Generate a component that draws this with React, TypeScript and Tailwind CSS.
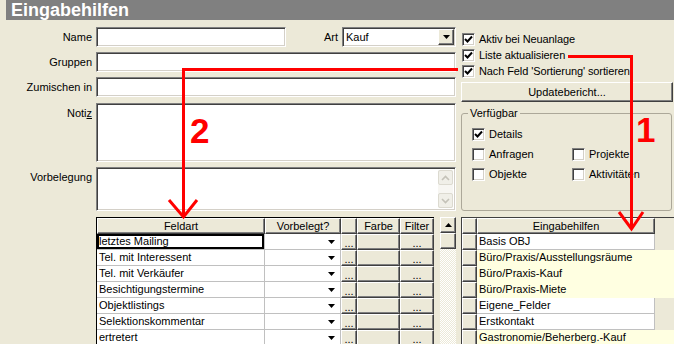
import React from 'react'

const sunken =
  'border border-t-[#808080] border-l-[#808080] border-r-white border-b-white bg-white shadow-[inset_1px_1px_0_#404040,inset_-1px_-1px_0_#d4d0c8]'
const raised =
  'border border-t-white border-l-white border-r-[#404040] border-b-[#404040] bg-[#ece9d8] shadow-[inset_-1px_-1px_0_#808080]'

const fields = [
  'letztes Mailing',
  'Tel. mit Interessent',
  'Tel. mit Verkäufer',
  'Besichtigungstermine',
  'Objektlistings',
  'Selektionskommentar',
  'ertretert',
]

const helpers = [
  { name: 'Basis OBJ', yellow: false },
  { name: 'Büro/Praxis/Ausstellungsräume', yellow: true },
  { name: 'Büro/Praxis-Kauf', yellow: true },
  { name: 'Büro/Praxis-Miete', yellow: true },
  { name: 'Eigene_Felder', yellow: false },
  { name: 'Erstkontakt', yellow: false },
  { name: 'Gastronomie/Beherberg.-Kauf', yellow: true },
]

function Check({ checked }: { checked?: boolean }) {
  return (
    <span className={`flex h-[13px] w-[13px] shrink-0 items-center justify-center ${sunken}`}>
      {checked && (
        <svg width="9" height="9" viewBox="0 0 9 9">
          <path d="M1 4 L3.5 6.5 L8 1.5" fill="none" stroke="black" strokeWidth="2" />
        </svg>
      )}
    </span>
  )
}

function Arrow({ up }: { up?: boolean }) {
  return (
    <svg width="7" height="4" viewBox="0 0 7 4">
      <polygon points={up ? '3.5,0 7,4 0,4' : '0,0 7,0 3.5,4'} fill="black" />
    </svg>
  )
}

function Label({ children, top }: { children: React.ReactNode; top?: boolean }) {
  return (
    <div className={`flex w-[92px] shrink-0 justify-end ${top ? 'items-start pt-[2px]' : 'items-center'}`}>
      {children}
    </div>
  )
}

function FieldGrid() {
  return (
    <div className="mt-[6px] ml-[96px] flex">
      <div className="w-[338px] border-t border-l border-black">
        <div className="flex h-[16px]">
          <div className={`w-[168px] text-center leading-[14px] ${raised}`}>Feldart</div>
          <div className={`w-[76px] text-center leading-[14px] ${raised}`}>Vorbelegt?</div>
          <div className={`w-[16px] ${raised}`} />
          <div className={`w-[43px] text-center leading-[14px] ${raised}`}>Farbe</div>
          <div className={`w-[34px] text-center leading-[14px] ${raised}`}>Filter</div>
        </div>
        {fields.map((f, i) => (
          <div key={f} className="flex h-[16px]">
            <div
              className={`w-[168px] truncate border-r border-b border-[#c0c0c0] bg-white pl-[2px] leading-[15px] ${
                i === 0 ? 'shadow-[inset_0_0_0_2px_black]' : ''
              }`}
            >
              {f}
            </div>
            <div className="flex w-[76px] justify-end border-r border-b border-[#c0c0c0] bg-white">
              <div className="flex w-[17px] items-center justify-center">
                <Arrow />
              </div>
            </div>
            <div className={`w-[16px] text-center leading-[16px] ${raised}`}>...</div>
            <div className={`w-[43px] ${raised}`} />
            <div className={`w-[34px] text-center leading-[16px] ${raised}`}>...</div>
          </div>
        ))}
      </div>
      <div className="ml-[6px] flex w-[16px] flex-col">
        <div className={`flex h-[16px] items-center justify-center ${raised}`}>
          <Arrow up />
        </div>
        <div className={`h-[16px] ${raised}`} />
        <div className="flex-1 bg-[repeating-conic-gradient(#ffffff_0_25%,#ece9d8_0_50%)] bg-[length:2px_2px]" />
      </div>
    </div>
  )
}

function LeftPane() {
  return (
    <div className="flex w-[456px] shrink-0 flex-col">
      <div className="flex h-[20px]">
        <Label>Name</Label>
        <div className={`ml-[4px] h-[20px] w-[190px] ${sunken}`} />
        <div className="flex flex-1 items-center justify-end pr-[4px]">Art</div>
        <div className={`flex h-[20px] w-[114px] items-center ${sunken}`}>
          <span className="flex-1 pl-[3px]">Kauf</span>
          <div className={`mr-[1px] flex h-[16px] w-[16px] items-center justify-center ${raised}`}>
            <Arrow />
          </div>
        </div>
      </div>
      <div className="mt-[5px] flex h-[20px]">
        <Label>Gruppen</Label>
        <div className={`ml-[4px] flex-1 ${sunken}`} />
      </div>
      <div className="mt-[5px] flex h-[20px]">
        <Label>Zumischen in</Label>
        <div className={`ml-[4px] flex-1 ${sunken}`} />
      </div>
      <div className="mt-[6px] flex h-[59px]">
        <Label top>
          <span>
            Noti<u>z</u>
          </span>
        </Label>
        <div className={`ml-[4px] flex-1 ${sunken}`} />
      </div>
      <div className="mt-[5px] flex h-[44px]">
        <Label top>Vorbelegung</Label>
        <div className={`ml-[4px] flex flex-1 justify-end p-[2px] ${sunken}`}>
          <div className="flex w-[15px] flex-col justify-between bg-[#f7f6f2]">
            <div className="flex h-[15px] items-center justify-center rounded-[2px] border border-[#dcdad0] bg-[#f0efe8]">
              <svg width="9" height="6" viewBox="0 0 9 6">
                <path d="M1 5 L4.5 1.5 L8 5" fill="none" stroke="#c4c2b8" strokeWidth="1.6" />
              </svg>
            </div>
            <div className="flex h-[15px] items-center justify-center rounded-[2px] border border-[#dcdad0] bg-[#f0efe8]">
              <svg width="9" height="6" viewBox="0 0 9 6">
                <path d="M1 1 L4.5 4.5 L8 1" fill="none" stroke="#c4c2b8" strokeWidth="1.6" />
              </svg>
            </div>
          </div>
        </div>
      </div>
      <FieldGrid />
    </div>
  )
}

function RightPane() {
  return (
    <div className="ml-[5px] flex w-[213px] shrink-0 flex-col">
      <div className="mt-[4px] flex flex-col">
        {['Aktiv bei Neuanlage', 'Liste aktualisieren', "Nach Feld 'Sortierung' sortieren"].map((t) => (
          <div key={t} className="flex h-[16px] items-center gap-[4px] pl-[1px]">
            <Check checked />
            <span className="tracking-[-0.1px]">{t}</span>
          </div>
        ))}
      </div>
      <button className={`mt-[3px] h-[20px] w-[212px] text-center ${raised}`}>Updatebericht...</button>
      <fieldset className="mt-[5px] h-[104px] w-[211px] rounded-[3px] border border-[#aca899]">
        <legend className="ml-[6px] px-[2px] leading-[13px]">Verfügbar</legend>
        <div className="grid grid-cols-[100px_1fr] pt-[4px] pl-[10px]">
          {[
            ['Details', true],
            ['', false],
            ['Anfragen', false],
            ['Projekte', false],
            ['Objekte', false],
            ['Aktivitäten', false],
          ].map(([t, c], i) => (
            <div key={i} className="flex h-[20px] items-center gap-[4px]">
              {t !== '' && (
                <>
                  <Check checked={c as boolean} />
                  <span>{t as string}</span>
                </>
              )}
            </div>
          ))}
        </div>
      </fieldset>
      <div className="mt-[6px] border-l border-t border-[#404040]">
        <div className="flex h-[16px]">
          <div className={`w-[15px] ${raised}`} />
          <div className={`w-[178px] text-center leading-[14px] ${raised}`}>Eingabehilfen</div>
        </div>
        {helpers.map((h) => (
          <div key={h.name} className="flex h-[16px]">
            <div className={`w-[15px] shrink-0 ${raised}`} />
            <div
              className={`whitespace-nowrap pl-[2px] leading-[15px] ${
                h.yellow ? 'w-[200px] bg-[#ffffe1]' : 'w-[178px] border-r border-b border-[#c0c0c0] bg-white'
              }`}
            >
              {h.name}
            </div>
          </div>
        ))}
      </div>
    </div>
  )
}

function Annotations() {
  return (
    <svg className="pointer-events-none absolute top-0 left-0" width="674" height="344">
      <g fill="none" stroke="#ff0000" strokeWidth="3">
        <polyline points="458,69.5 183.5,69.5 183.5,216" />
        <polyline points="169,200 183.5,217 197,200" />
        <polyline points="568,56.5 631.5,56.5 631.5,229" />
        <polyline points="619,212 631.5,229 643,212" />
      </g>
      <text
        x="190"
        y="143"
        fill="#ff0000"
        fontSize="35"
        fontWeight="bold"
        fontFamily="'Liberation Sans', Arial, sans-serif"
      >
        2
      </text>
      <text
        x="636"
        y="142"
        fill="#ff0000"
        fontSize="35"
        fontWeight="bold"
        fontFamily="'Liberation Sans', Arial, sans-serif"
      >
        1
      </text>
    </svg>
  )
}

export default function App() {
  return (
    <div className="relative h-[344px] w-[674px] overflow-hidden bg-[#ece9d8] font-['Liberation_Sans',Arial,sans-serif] text-[11px] text-black">
      <div className="ml-[6px] h-[20px] bg-[#808080] pl-[5px] text-[18px] leading-[20px] font-bold text-white">
        Eingabehilfen
      </div>
      <div className="flex pt-[7px]">
        <LeftPane />
        <RightPane />
      </div>
      <Annotations />
    </div>
  )
}
